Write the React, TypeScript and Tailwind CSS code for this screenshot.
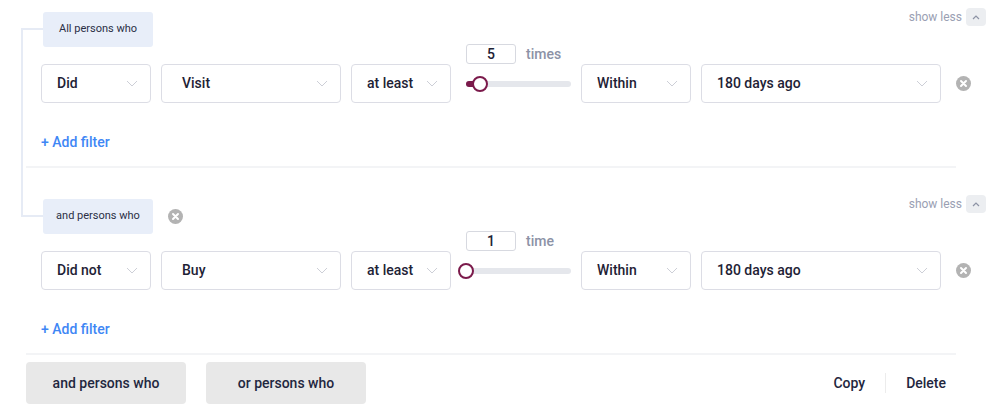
import React from "react";

const Chevron = () => (
  <svg width="12" height="7" viewBox="0 0 12 7" fill="none" className="shrink-0">
    <path d="M1 1l5 5 5-5" stroke="#cdcfd7" strokeWidth="1" />
  </svg>
);

const XCircle = () => (
  <svg width="15" height="15" viewBox="0 0 15 15" className="shrink-0">
    <circle cx="7.5" cy="7.5" r="7.5" fill="#b3b3b3" />
    <path d="M5 5l5 5M10 5l-5 5" stroke="#fff" strokeWidth="2" strokeLinecap="round" />
  </svg>
);

function Select({ label, w, pl }: { label: string; w: string; pl?: string }) {
  return (
    <div
      className={`${w} ${pl ?? "pl-[15px]"} h-[39px] rounded-[4px] border border-[#dcdde5] bg-white flex items-center justify-between pr-[12px] text-[14px] font-medium text-[#1e2235]`}
    >
      <span>{label}</span>
      <Chevron />
    </div>
  );
}

function ShowLess() {
  return (
    <div className="flex items-center gap-[4px] text-[12px] text-[#9aa0b3]">
      <span>show less</span>
      <div className="w-[20px] h-[18px] rounded-[4px] bg-[#eceef1] flex items-center justify-center">
        <svg width="8" height="5" viewBox="0 0 8 5" fill="none">
          <path d="M1 4l3-3 3 3" stroke="#8d93a5" strokeWidth="1.2" />
        </svg>
      </div>
    </div>
  );
}

function Slider({ value, unit, pos }: { value: string; unit: string; pos: number }) {
  return (
    <div className="w-[105px] flex flex-col ml-[5px]">
      <div className="h-[20px] flex items-center gap-[10px]">
        <div className="w-[50px] h-[20px] rounded-[3px] border border-[#d7d9e0] flex items-center justify-center text-[14px] font-medium text-[#1e2235]">
          {value}
        </div>
        <span className="text-[14px] text-[#8c92a6] font-medium">{unit}</span>
      </div>
      <div className="h-[39px] flex items-center">
        <div className="relative w-full h-[6px] rounded-full bg-[#e5e7ec]">
          <div className="absolute left-0 top-0 h-full rounded-l-full bg-[#7b1a4b]" style={{ width: pos }} />
          <div
            className="absolute top-1/2 w-[16px] h-[16px] -translate-y-1/2 -translate-x-1/2 rounded-full border-[2.5px] border-[#7b1a4b] bg-white"
            style={{ left: pos }}
          />
        </div>
      </div>
    </div>
  );
}

function Section({
  pill,
  did,
  event,
  value,
  unit,
  pos,
  removable,
}: {
  pill: string;
  did: string;
  event: string;
  value: string;
  unit: string;
  pos: number;
  removable?: boolean;
}) {
  return (
    <div className="flex flex-col">
      <div className="flex items-start justify-between">
        <div className="flex items-center mt-[4px] ml-[17px] gap-[15px]">
          <div className="w-[110px] h-[35px] rounded-[3px] bg-[#e8eef9] flex items-center justify-center text-[11px] text-[#2a2f45]">
            {pill}
          </div>
          {removable && <XCircle />}
        </div>
        <ShowLess />
      </div>
      <div className="flex items-end gap-[10px] ml-[15px] -mt-[3px]">
        <Select label={did} w="w-[110px]" />
        <Select label={event} w="w-[180px]" pl="pl-[20px]" />
        <Select label="at least" w="w-[100px]" />
        <Slider value={value} unit={unit} pos={pos} />
        <Select label="Within" w="w-[110px]" />
        <Select label="180 days ago" w="w-[240px]" />
        <div className="h-[39px] flex items-center ml-[5px]">
          <XCircle />
        </div>
      </div>
      <div className="ml-[15px] mt-[29px] h-[20px] flex items-center text-[14px] font-medium text-[#3f87f5]">
        + Add filter
      </div>
    </div>
  );
}

export default function App() {
  return (
    <div
      className="relative w-[996px] h-[412px] bg-white overflow-hidden"
      style={{ fontFamily: "Roboto, 'Liberation Sans', sans-serif" }}
    >
      {/* tree connector */}
      <div className="absolute left-[21px] top-[29px] w-[2px] h-[187px] bg-[#e6ebf5]" />
      <div className="absolute left-[21px] top-[28px] w-[22px] h-[2px] bg-[#e6ebf5]" />
      <div className="absolute left-[21px] top-[215px] w-[22px] h-[2px] bg-[#e6ebf5]" />

      <div className="pl-[26px] pr-[10px] pt-[8px] flex flex-col">
        <Section pill="All persons who" did="Did" event="Visit" value="5" unit="times" pos={14} />
        <div className="mt-[14px] mr-[30px] h-[2px] bg-[#f3f4f6]" />
        <div className="mt-[27px]">
          <Section pill="and persons who" did="Did not" event="Buy" value="1" unit="time" pos={0} removable />
        </div>
        <div className="mt-[14px] mr-[30px] h-[2px] bg-[#f3f4f6]" />
        <div className="mt-[7px] mr-[40px] flex items-center justify-between">
          <div className="flex gap-[20px]">
            <div className="w-[160px] h-[42px] rounded-[4px] bg-[#e8e8e8] flex items-center justify-center text-[14px] font-medium text-[#1f2740]">
              and persons who
            </div>
            <div className="w-[160px] h-[42px] rounded-[4px] bg-[#e8e8e8] flex items-center justify-center text-[14px] font-medium text-[#1f2740]">
              or persons who
            </div>
          </div>
          <div className="flex items-center text-[14px] font-medium text-[#1f2740]">
            <span>Copy</span>
            <div className="mx-[20px] w-px h-[20px] bg-[#ececec]" />
            <span>Delete</span>
          </div>
        </div>
      </div>
    </div>
  );
}
